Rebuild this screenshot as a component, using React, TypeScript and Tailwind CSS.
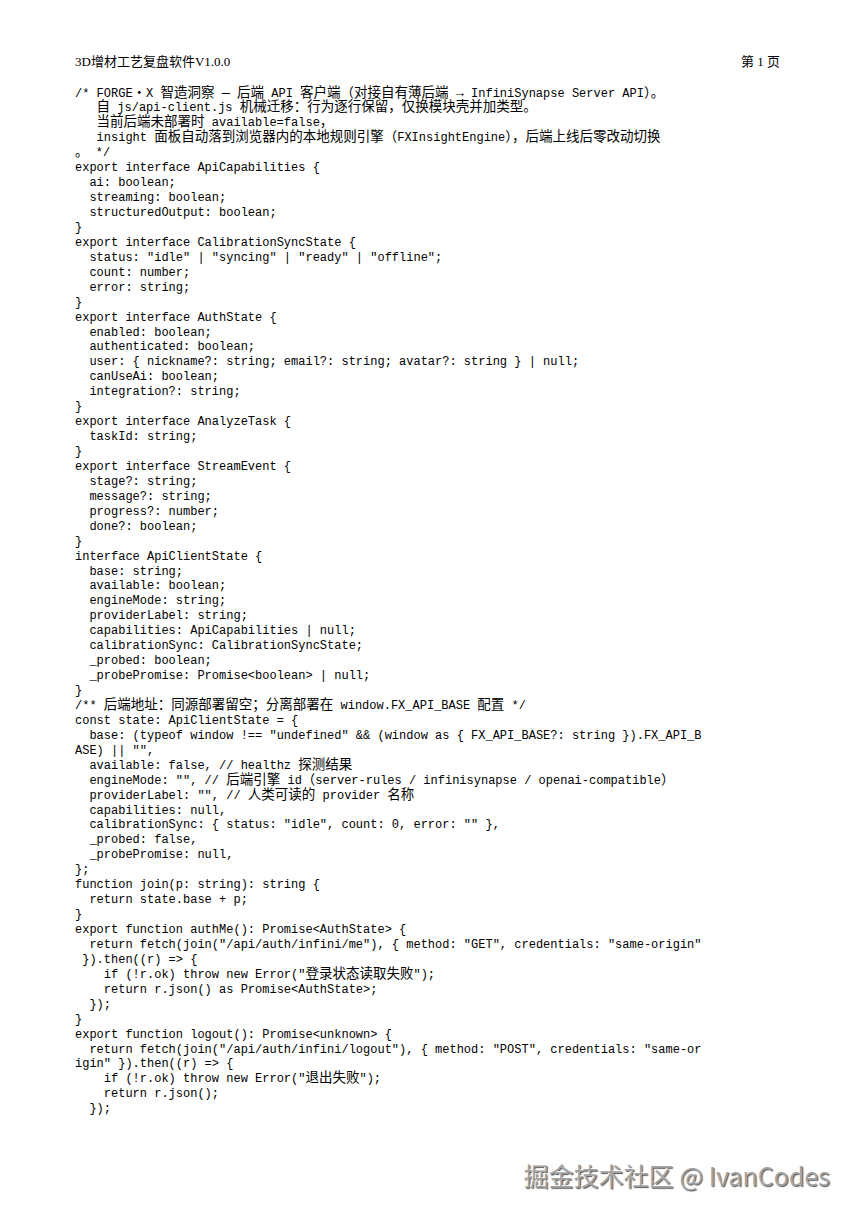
const codeLines: string[] = [
  "/* FORGE・X 智造洞察 — 后端 API 客户端（对接自有薄后端 → InfiniSynapse Server API）。",
  "   自 js/api-client.js 机械迁移：行为逐行保留，仅换模块壳并加类型。",
  "   当前后端未部署时 available=false，",
  "   insight 面板自动落到浏览器内的本地规则引擎（FXInsightEngine），后端上线后零改动切换",
  "。 */",
  "export interface ApiCapabilities {",
  "  ai: boolean;",
  "  streaming: boolean;",
  "  structuredOutput: boolean;",
  "}",
  "export interface CalibrationSyncState {",
  '  status: "idle" | "syncing" | "ready" | "offline";',
  "  count: number;",
  "  error: string;",
  "}",
  "export interface AuthState {",
  "  enabled: boolean;",
  "  authenticated: boolean;",
  "  user: { nickname?: string; email?: string; avatar?: string } | null;",
  "  canUseAi: boolean;",
  "  integration?: string;",
  "}",
  "export interface AnalyzeTask {",
  "  taskId: string;",
  "}",
  "export interface StreamEvent {",
  "  stage?: string;",
  "  message?: string;",
  "  progress?: number;",
  "  done?: boolean;",
  "}",
  "interface ApiClientState {",
  "  base: string;",
  "  available: boolean;",
  "  engineMode: string;",
  "  providerLabel: string;",
  "  capabilities: ApiCapabilities | null;",
  "  calibrationSync: CalibrationSyncState;",
  "  _probed: boolean;",
  "  _probePromise: Promise<boolean> | null;",
  "}",
  "/** 后端地址：同源部署留空；分离部署在 window.FX_API_BASE 配置 */",
  "const state: ApiClientState = {",
  '  base: (typeof window !== "undefined" && (window as { FX_API_BASE?: string }).FX_API_B',
  'ASE) || "",',
  "  available: false, // healthz 探测结果",
  '  engineMode: "", // 后端引擎 id（server-rules / infinisynapse / openai-compatible）',
  '  providerLabel: "", // 人类可读的 provider 名称',
  "  capabilities: null,",
  '  calibrationSync: { status: "idle", count: 0, error: "" },',
  "  _probed: false,",
  "  _probePromise: null,",
  "};",
  "function join(p: string): string {",
  "  return state.base + p;",
  "}",
  "export function authMe(): Promise<AuthState> {",
  '  return fetch(join("/api/auth/infini/me"), { method: "GET", credentials: "same-origin"',
  " }).then((r) => {",
  '    if (!r.ok) throw new Error("登录状态读取失败");',
  "    return r.json() as Promise<AuthState>;",
  "  });",
  "}",
  "export function logout(): Promise<unknown> {",
  '  return fetch(join("/api/auth/infini/logout"), { method: "POST", credentials: "same-or',
  'igin" }).then((r) => {',
  '    if (!r.ok) throw new Error("退出失败");',
  "    return r.json();",
  "  });",
];

// wide glyphs (CJK, full-width punctuation, arrow, dash) are set a bit larger, like the PDF
const wide = /([\u2014\u2192\u3000-\u303f\u30fb\u4e00-\u9fff\uff00-\uffef]+)/;

function CodeLine({ text }: { text: string }) {
  const parts = text.split(wide);
  return (
    <div className="whitespace-pre h-[14.94px]">
      {parts.map((part, i) =>
        i % 2 === 1 ? (
          <span key={i} className="text-[13.5px]">
            {part}
          </span>
        ) : (
          <span key={i}>{part}</span>
        )
      )}
    </div>
  );
}

export default function App() {
  return (
    <div className="min-h-[1217px] w-[857px] bg-white text-black">
      <div className="pl-[75px] pr-[77px] pt-[54px]">
        <div className="flex justify-between h-4 text-[13px] leading-4 font-['Liberation_Serif','Noto_Sans_CJK_SC',serif]">
          <span>3D增材工艺复盘软件V1.0.0</span>
          <span>第 1 页</span>
        </div>
        <div className="mt-[16.5px] text-[12px] leading-[14.94px] font-['Liberation_Mono','Noto_Sans_CJK_SC',monospace]">
          {codeLines.map((line, i) => (
            <CodeLine key={i} text={line} />
          ))}
        </div>
      </div>
      <div className="flex justify-end pr-[27px] mt-[41px]">
        <span className="text-[25px] leading-[34px] text-[#a3a3a3] font-['Noto_Sans_CJK_SC',sans-serif] [text-shadow:-1px_-1px_0_#ffffff,1px_1px_1px_#555555]">
          掘金技术社区 @ IvanCodes
        </span>
      </div>
    </div>
  );
}
